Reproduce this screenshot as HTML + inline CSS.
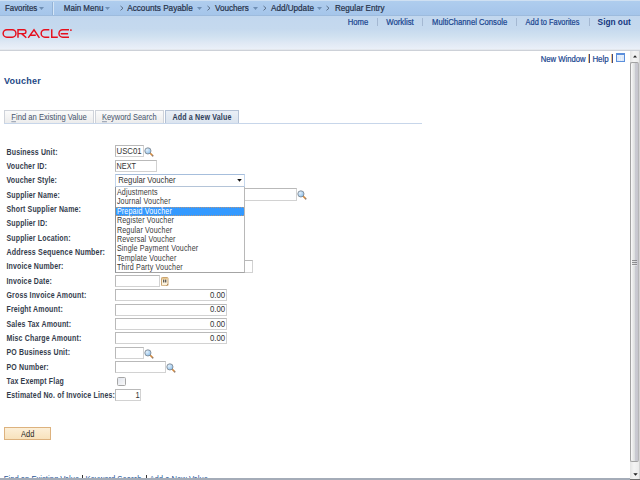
<!DOCTYPE html>
<html><head><meta charset="utf-8"><style>
html,body{margin:0;padding:0;width:640px;height:480px;overflow:hidden;background:#fff}
body{position:relative;font-family:"Liberation Sans",sans-serif}
.t{position:absolute;white-space:pre;line-height:1}
.s{-webkit-text-stroke:0.2px currentColor}
.b{position:absolute;display:block}
.tab{border:1px solid #cfd3da;border-bottom:none;background:linear-gradient(#fbfbfb,#ececec)}
.tabA{border:1px solid #b4c2d6;border-bottom:none;background:linear-gradient(#e9eff6,#dbe4ef)}
</style></head><body>
<div class="b" style="left:0px;top:0px;width:640px;height:1px;background:#cfe0f2"></div>
<div class="b" style="left:0px;top:1px;width:640px;height:14px;background:linear-gradient(#afcdee,#a5c5ea)"></div>
<div class="b" style="left:0px;top:15px;width:640px;height:1px;background:#9dbbdd"></div>
<div class="t" style="left:5px;top:5px;font-size:7.85px;font-weight:normal;color:#26324a;transform:scaleY(1.12);transform-origin:0 6px;-webkit-text-stroke:0.2px #26324a">Favorites</div>
<div class="b" style="left:52px;top:2px;width:1px;height:13px;background:#94b3d6"></div>
<div class="b" style="left:53px;top:2px;width:1px;height:13px;background:#d6e6f6"></div>
<div class="t" style="left:63.8px;top:5px;font-size:8.0px;font-weight:normal;color:#26324a;transform:scaleY(1.12);transform-origin:0 6px;-webkit-text-stroke:0.2px #26324a">Main Menu</div>
<div class="t" style="left:127.2px;top:5px;font-size:8.2px;font-weight:normal;color:#26324a;transform:scaleY(1.12);transform-origin:0 6px;-webkit-text-stroke:0.2px #26324a">Accounts Payable</div>
<div class="t" style="left:215px;top:5px;font-size:8.15px;font-weight:normal;color:#26324a;transform:scaleY(1.12);transform-origin:0 6px;-webkit-text-stroke:0.2px #26324a">Vouchers</div>
<div class="t" style="left:271px;top:5px;font-size:8.15px;font-weight:normal;color:#26324a;transform:scaleY(1.12);transform-origin:0 6px;-webkit-text-stroke:0.2px #26324a">Add/Update</div>
<div class="t" style="left:335px;top:5px;font-size:8.1px;font-weight:normal;color:#26324a;transform:scaleY(1.12);transform-origin:0 6px;-webkit-text-stroke:0.2px #26324a">Regular Entry</div>
<svg class="b" style="left:39.2px;top:7px" width="5" height="3"><path d="M0 0H5L2.5 3Z" fill="#6f8fb4"/></svg>
<svg class="b" style="left:105.2px;top:7px" width="5" height="3"><path d="M0 0H5L2.5 3Z" fill="#6f8fb4"/></svg>
<svg class="b" style="left:196.8px;top:7px" width="5" height="3"><path d="M0 0H5L2.5 3Z" fill="#6f8fb4"/></svg>
<svg class="b" style="left:252.8px;top:7px" width="5" height="3"><path d="M0 0H5L2.5 3Z" fill="#6f8fb4"/></svg>
<svg class="b" style="left:316.5px;top:7px" width="5" height="3"><path d="M0 0H5L2.5 3Z" fill="#6f8fb4"/></svg>
<svg class="b" style="left:119.5px;top:5px" width="4" height="7"><path d="M0.5 1L3 3.2L0.5 5.4" stroke="#4e5e74" stroke-width="0.85" fill="none"/></svg>
<svg class="b" style="left:206.8px;top:5px" width="4" height="7"><path d="M0.5 1L3 3.2L0.5 5.4" stroke="#4e5e74" stroke-width="0.85" fill="none"/></svg>
<svg class="b" style="left:262.6px;top:5px" width="4" height="7"><path d="M0.5 1L3 3.2L0.5 5.4" stroke="#4e5e74" stroke-width="0.85" fill="none"/></svg>
<svg class="b" style="left:326.2px;top:5px" width="4" height="7"><path d="M0.5 1L3 3.2L0.5 5.4" stroke="#4e5e74" stroke-width="0.85" fill="none"/></svg>
<div class="b" style="left:0px;top:16px;width:640px;height:34px;background:linear-gradient(#c2d7ee,#c5d9ee 38%,#d0e1f0 60%,#e0e9f5 80%,#ecf1f9)"></div>
<div class="b" style="left:0px;top:49px;width:640px;height:1px;background:#e4e8ee"></div>
<div class="b" style="left:0px;top:50px;width:640px;height:1px;background:#cdd1d8"></div>
<div class="t" style="left:347.7px;top:19px;font-size:7.7px;font-weight:normal;color:#1a4690;transform:scaleY(1.12);transform-origin:0 6px;-webkit-text-stroke:0.2px #1a4690">Home</div>
<div class="b" style="left:377px;top:18px;width:1px;height:8px;background:#a4b8d2"></div>
<div class="t" style="left:386.2px;top:19px;font-size:7.8px;font-weight:normal;color:#1a4690;transform:scaleY(1.12);transform-origin:0 6px;-webkit-text-stroke:0.2px #1a4690">Worklist</div>
<div class="b" style="left:422px;top:18px;width:1px;height:8px;background:#a4b8d2"></div>
<div class="t" style="left:432px;top:19px;font-size:7.7px;font-weight:normal;color:#1a4690;transform:scaleY(1.12);transform-origin:0 6px;-webkit-text-stroke:0.2px #1a4690">MultiChannel Console</div>
<div class="b" style="left:516px;top:18px;width:1px;height:8px;background:#a4b8d2"></div>
<div class="t" style="left:525.6px;top:19px;font-size:7.4px;font-weight:normal;color:#1a4690;transform:scaleY(1.12);transform-origin:0 6px;-webkit-text-stroke:0.2px #1a4690">Add to Favorites</div>
<div class="b" style="left:589px;top:18px;width:1px;height:8px;background:#a4b8d2"></div>
<div class="t" style="left:597.6px;top:18px;font-size:8.3px;font-weight:bold;color:#143780;transform:scaleY(1.12);transform-origin:0 6px;">Sign out</div>
<svg class="b" style="left:0px;top:26px" width="76" height="15" viewBox="0 0 76 15">
<g fill="none" stroke="#e60f1c" stroke-width="1.45">
<path d="M6.85 3.75H12.25A3.7 3.7 0 0 1 12.25 11.15H6.85A3.7 3.7 0 0 1 6.85 3.75Z"/>
<path d="M18 11.8V3.75H24.2A1.93 1.93 0 0 1 24.2 7.6H18M21.6 7.6L26.3 11.8"/>
<path d="M28.2 11.8L34 3.75L39.4 11.8M30.4 9.2H35.8"/>
<path d="M49.3 3.75H44.85A3.7 3.7 0 0 0 44.85 11.15H49.3"/>
<path d="M51.75 3.2V11.15H57.8"/>
<path d="M69 3.75H62.65A3.7 3.7 0 0 0 62.65 11.15H69M60.7 7.65H68.1"/>
</g>
<circle cx="70.9" cy="4.1" r="0.95" fill="#e4121c"/>
</svg>
<div class="b" style="left:0px;top:51px;width:630px;height:429px;background:#fff"></div>
<div class="t" style="left:540.8px;top:56px;font-size:7.7px;font-weight:normal;color:#1a4690;transform:scaleY(1.12);transform-origin:0 6px;-webkit-text-stroke:0.2px #1a4690">New Window</div>
<div class="b" style="left:588px;top:54px;width:1px;height:9px;background:#f0c080"></div>
<div class="b" style="left:589px;top:54px;width:1px;height:9px;background:#3c4c88"></div>
<div class="t" style="left:592.4px;top:56px;font-size:7.9px;font-weight:normal;color:#1a4690;transform:scaleY(1.12);transform-origin:0 6px;-webkit-text-stroke:0.2px #1a4690">Help</div>
<div class="b" style="left:611px;top:54px;width:1px;height:9px;background:#f0c080"></div>
<div class="b" style="left:612px;top:54px;width:1px;height:9px;background:#3c4c88"></div>
<svg class="b" style="left:616px;top:53px" width="9" height="9">
<rect x="0.5" y="0.5" width="8" height="8" fill="#d2e2f7" stroke="#5b8fdc"/>
<rect x="1" y="1" width="7" height="1.3" fill="#5b8fdc"/>
<rect x="1" y="2.3" width="7" height="1" fill="#ffffff"/>
<path d="M1 5H8M1 6.8H8M3.5 3.3V8M5.5 3.3V8" stroke="#f2f7fd" stroke-width="0.6"/>
</svg>
<div class="t" style="left:3.9px;top:77px;font-size:9.0px;font-weight:bold;color:#234886;letter-spacing:0.25px">Voucher</div>
<div class="b" style="left:4px;top:123px;width:418px;height:1px;background:#c7d6ea"></div>
<div class="b tab" style="left:4px;top:110px;width:88px;height:12px"></div>
<div class="t" style="left:11.3px;top:114px;font-size:7.65px;font-weight:normal;color:#46546c;transform:scaleY(1.12);transform-origin:0 6px;"><u style="text-decoration-thickness:0.5px;text-underline-offset:1px;text-decoration-color:#9aa4b4">F</u>ind an Existing Value</div>
<div class="b tab" style="left:95px;top:110px;width:67px;height:12px"></div>
<div class="t" style="left:102px;top:114px;font-size:7.45px;font-weight:normal;color:#46546c;transform:scaleY(1.12);transform-origin:0 6px;"><u style="text-decoration-thickness:0.5px;text-underline-offset:1px;text-decoration-color:#9aa4b4">K</u>eyword Search</div>
<div class="b tabA" style="left:165px;top:110px;width:72px;height:12px"></div>
<div class="t" style="left:172.5px;top:115px;font-size:7.1px;font-weight:bold;color:#2e3d58;transform:scaleY(1.16);transform-origin:0 6px;letter-spacing:0.15px">Add a New Value</div>
<div class="t" style="left:6.5px;top:149px;font-size:7.0px;font-weight:bold;color:#343c4c;transform:scaleY(1.18);transform-origin:0 6px;letter-spacing:0.15px">Business Unit:</div>
<div class="t" style="left:6.5px;top:163px;font-size:7.0px;font-weight:bold;color:#343c4c;transform:scaleY(1.18);transform-origin:0 6px;letter-spacing:0.15px">Voucher ID:</div>
<div class="t" style="left:6.5px;top:177px;font-size:7.0px;font-weight:bold;color:#343c4c;transform:scaleY(1.18);transform-origin:0 6px;letter-spacing:0.15px">Voucher Style:</div>
<div class="t" style="left:6.5px;top:192px;font-size:7.0px;font-weight:bold;color:#343c4c;transform:scaleY(1.18);transform-origin:0 6px;letter-spacing:0.15px">Supplier Name:</div>
<div class="t" style="left:6.5px;top:206px;font-size:7.0px;font-weight:bold;color:#343c4c;transform:scaleY(1.18);transform-origin:0 6px;letter-spacing:0.15px">Short Supplier Name:</div>
<div class="t" style="left:6.5px;top:220px;font-size:7.0px;font-weight:bold;color:#343c4c;transform:scaleY(1.18);transform-origin:0 6px;letter-spacing:0.15px">Supplier ID:</div>
<div class="t" style="left:6.5px;top:235px;font-size:7.0px;font-weight:bold;color:#343c4c;transform:scaleY(1.18);transform-origin:0 6px;letter-spacing:0.15px">Supplier Location:</div>
<div class="t" style="left:6.5px;top:250px;font-size:7.1px;font-weight:bold;color:#343c4c;transform:scaleY(1.18);transform-origin:0 6px;letter-spacing:0.15px">Address Sequence Number:</div>
<div class="t" style="left:6.5px;top:263px;font-size:7.0px;font-weight:bold;color:#343c4c;transform:scaleY(1.18);transform-origin:0 6px;letter-spacing:0.15px">Invoice Number:</div>
<div class="t" style="left:6.5px;top:278px;font-size:7.0px;font-weight:bold;color:#343c4c;transform:scaleY(1.18);transform-origin:0 6px;letter-spacing:0.15px">Invoice Date:</div>
<div class="t" style="left:6.5px;top:292px;font-size:7.0px;font-weight:bold;color:#343c4c;transform:scaleY(1.18);transform-origin:0 6px;letter-spacing:0.15px">Gross Invoice Amount:</div>
<div class="t" style="left:6.5px;top:306px;font-size:7.0px;font-weight:bold;color:#343c4c;transform:scaleY(1.18);transform-origin:0 6px;letter-spacing:0.15px">Freight Amount:</div>
<div class="t" style="left:6.5px;top:321px;font-size:7.0px;font-weight:bold;color:#343c4c;transform:scaleY(1.18);transform-origin:0 6px;letter-spacing:0.15px">Sales Tax Amount:</div>
<div class="t" style="left:6.5px;top:335px;font-size:7.0px;font-weight:bold;color:#343c4c;transform:scaleY(1.18);transform-origin:0 6px;letter-spacing:0.15px">Misc Charge Amount:</div>
<div class="t" style="left:6.5px;top:349px;font-size:7.0px;font-weight:bold;color:#343c4c;transform:scaleY(1.18);transform-origin:0 6px;letter-spacing:0.15px">PO Business Unit:</div>
<div class="t" style="left:6.5px;top:364px;font-size:7.0px;font-weight:bold;color:#343c4c;transform:scaleY(1.18);transform-origin:0 6px;letter-spacing:0.15px">PO Number:</div>
<div class="t" style="left:6.5px;top:378px;font-size:7.0px;font-weight:bold;color:#343c4c;transform:scaleY(1.18);transform-origin:0 6px;letter-spacing:0.15px">Tax Exempt Flag</div>
<div class="t" style="left:6.5px;top:392px;font-size:7.0px;font-weight:bold;color:#343c4c;transform:scaleY(1.18);transform-origin:0 6px;letter-spacing:0.15px">Estimated No. of Invoice Lines:</div>
<div class="b" style="left:115px;top:145px;width:29px;height:12px;border:1px solid #b9b9b9;border-right-color:#d2d2d2;border-bottom-color:#d2d2d2;background:#fff;box-sizing:border-box"></div>
<div class="t" style="left:116.5px;top:148px;font-size:7.8px;font-weight:normal;color:#333;transform:scaleY(1.12);transform-origin:0 6px;">USC01</div>
<svg class="b" style="left:144px;top:147px" width="10" height="10">
<defs><radialGradient id="lg" cx="0.35" cy="0.35" r="0.7"><stop offset="0" stop-color="#e4f1fc"/><stop offset="1" stop-color="#8dbfea"/></radialGradient></defs>
<path d="M6 6L8.6 8.6" stroke="#d28a40" stroke-width="1.7" stroke-linecap="round"/>
<circle cx="8.8" cy="8.8" r="0.6" fill="#4a78b8"/>
<circle cx="3.9" cy="3.9" r="3.1" fill="url(#lg)" stroke="#7a8088" stroke-width="0.8"/>
</svg>
<div class="b" style="left:115px;top:160px;width:42px;height:12px;border:1px solid #b9b9b9;border-right-color:#d2d2d2;border-bottom-color:#d2d2d2;background:#fff;box-sizing:border-box"></div>
<div class="t" style="left:116.5px;top:163px;font-size:7.3px;font-weight:normal;color:#333;transform:scaleY(1.12);transform-origin:0 6px;">NEXT</div>
<div class="b" style="left:115px;top:188px;width:182px;height:13px;border:1px solid #b9b9b9;border-right-color:#d2d2d2;border-bottom-color:#d2d2d2;background:#fff;box-sizing:border-box"></div>
<svg class="b" style="left:297px;top:189.5px" width="10" height="10">
<defs><radialGradient id="lg" cx="0.35" cy="0.35" r="0.7"><stop offset="0" stop-color="#e4f1fc"/><stop offset="1" stop-color="#8dbfea"/></radialGradient></defs>
<path d="M6 6L8.6 8.6" stroke="#d28a40" stroke-width="1.7" stroke-linecap="round"/>
<circle cx="8.8" cy="8.8" r="0.6" fill="#4a78b8"/>
<circle cx="3.9" cy="3.9" r="3.1" fill="url(#lg)" stroke="#7a8088" stroke-width="0.8"/>
</svg>
<div class="b" style="left:115px;top:260px;width:138px;height:13px;border:1px solid #b9b9b9;border-right-color:#d2d2d2;border-bottom-color:#d2d2d2;background:#fff;box-sizing:border-box"></div>
<div class="b" style="left:115px;top:275px;width:45px;height:12px;border:1px solid #b9b9b9;border-right-color:#d2d2d2;border-bottom-color:#d2d2d2;background:#fff;box-sizing:border-box"></div>
<svg class="b" style="left:160.5px;top:276.8px" width="8" height="9.5">
<rect x="0.5" y="0.5" width="6.5" height="8.3" rx="0.8" fill="#fbf1dc" stroke="#c49a62" stroke-width="0.9"/>
<rect x="1" y="1" width="5.5" height="1.5" fill="#e8c890"/>
<rect x="2.2" y="2.6" width="1.1" height="2.8" rx="0.5" fill="#3a3a3a"/><rect x="4.2" y="2.6" width="1.1" height="2.8" rx="0.5" fill="#3a3a3a"/>
<path d="M5.5 8.5L7 7" stroke="#a07a48" stroke-width="0.8"/>
</svg>
<div class="b" style="left:115px;top:289.0px;width:112px;height:12px;border:1px solid #b9b9b9;border-right-color:#d2d2d2;border-bottom-color:#d2d2d2;background:#fff;box-sizing:border-box"></div>
<div class="t" style="left:209.9px;top:292px;font-size:7.8px;font-weight:normal;color:#333;transform:scaleY(1.12);transform-origin:0 6px;">0.00</div>
<div class="b" style="left:115px;top:303.5px;width:112px;height:12px;border:1px solid #b9b9b9;border-right-color:#d2d2d2;border-bottom-color:#d2d2d2;background:#fff;box-sizing:border-box"></div>
<div class="t" style="left:209.9px;top:306px;font-size:7.8px;font-weight:normal;color:#333;transform:scaleY(1.12);transform-origin:0 6px;">0.00</div>
<div class="b" style="left:115px;top:318.0px;width:112px;height:12px;border:1px solid #b9b9b9;border-right-color:#d2d2d2;border-bottom-color:#d2d2d2;background:#fff;box-sizing:border-box"></div>
<div class="t" style="left:209.9px;top:321px;font-size:7.8px;font-weight:normal;color:#333;transform:scaleY(1.12);transform-origin:0 6px;">0.00</div>
<div class="b" style="left:115px;top:332.0px;width:112px;height:12px;border:1px solid #b9b9b9;border-right-color:#d2d2d2;border-bottom-color:#d2d2d2;background:#fff;box-sizing:border-box"></div>
<div class="t" style="left:209.9px;top:335px;font-size:7.8px;font-weight:normal;color:#333;transform:scaleY(1.12);transform-origin:0 6px;">0.00</div>
<div class="b" style="left:115px;top:347px;width:29px;height:12px;border:1px solid #b9b9b9;border-right-color:#d2d2d2;border-bottom-color:#d2d2d2;background:#fff;box-sizing:border-box"></div>
<svg class="b" style="left:144.2px;top:349px" width="10" height="10">
<defs><radialGradient id="lg" cx="0.35" cy="0.35" r="0.7"><stop offset="0" stop-color="#e4f1fc"/><stop offset="1" stop-color="#8dbfea"/></radialGradient></defs>
<path d="M6 6L8.6 8.6" stroke="#d28a40" stroke-width="1.7" stroke-linecap="round"/>
<circle cx="8.8" cy="8.8" r="0.6" fill="#4a78b8"/>
<circle cx="3.9" cy="3.9" r="3.1" fill="url(#lg)" stroke="#7a8088" stroke-width="0.8"/>
</svg>
<div class="b" style="left:115px;top:361px;width:51px;height:12px;border:1px solid #b9b9b9;border-right-color:#d2d2d2;border-bottom-color:#d2d2d2;background:#fff;box-sizing:border-box"></div>
<svg class="b" style="left:166.2px;top:363px" width="10" height="10">
<defs><radialGradient id="lg" cx="0.35" cy="0.35" r="0.7"><stop offset="0" stop-color="#e4f1fc"/><stop offset="1" stop-color="#8dbfea"/></radialGradient></defs>
<path d="M6 6L8.6 8.6" stroke="#d28a40" stroke-width="1.7" stroke-linecap="round"/>
<circle cx="8.8" cy="8.8" r="0.6" fill="#4a78b8"/>
<circle cx="3.9" cy="3.9" r="3.1" fill="url(#lg)" stroke="#7a8088" stroke-width="0.8"/>
</svg>
<div class="b" style="left:117px;top:377px;width:9px;height:9px;border:1px solid #a6a6a6;border-radius:1.5px;background:linear-gradient(135deg,#e2e6ee,#f8f8f8);box-sizing:border-box"></div>
<div class="b" style="left:115px;top:389px;width:26px;height:12px;border:1px solid #b9b9b9;border-right-color:#d2d2d2;border-bottom-color:#d2d2d2;background:#fff;box-sizing:border-box"></div>
<div class="t" style="left:135.4px;top:392px;font-size:7.6px;font-weight:normal;color:#333;transform:scaleY(1.12);transform-origin:0 6px;">1</div>
<div class="b" style="left:4px;top:427px;width:47px;height:13px;border:1px solid #ddb27e;background:linear-gradient(#fcefd8,#f8e2bc);box-sizing:border-box"></div>
<div class="t" style="left:21.1px;top:431px;font-size:7.45px;font-weight:normal;color:#1e1e1e;transform:scaleY(1.12);transform-origin:0 6px;">Add</div>
<div class="b" style="left:115px;top:173.5px;width:130px;height:13.5px;border:1px solid #c4d6ec;border-top-color:#a6bedc;border-bottom-color:#b4c4d8;background:#fff;box-sizing:border-box"></div>
<div class="t" style="left:118.3px;top:177px;font-size:7.7px;font-weight:normal;color:#333;transform:scaleY(1.12);transform-origin:0 6px;">Regular Voucher</div>
<svg class="b" style="left:236.6px;top:179px" width="5" height="3"><path d="M0.2 0.1H4.8L2.5 2.7Z" fill="#111"/></svg>
<div class="b" style="left:115px;top:187px;width:130px;height:85.5px;border:1px solid #8e9298;border-top:none;border-right-color:#b8b8b8;border-bottom-color:#a4a4a4;background:#fff;box-sizing:border-box"></div>
<div class="t" style="left:116.9px;top:190px;font-size:7.15px;font-weight:normal;color:#3a3a3a;transform:scaleY(1.16);transform-origin:0 6px;letter-spacing:0.15px">Adjustments</div>
<div class="t" style="left:116.9px;top:199px;font-size:7.15px;font-weight:normal;color:#3a3a3a;transform:scaleY(1.16);transform-origin:0 6px;letter-spacing:0.15px">Journal Voucher</div>
<div class="b" style="left:116px;top:207px;width:127.8px;height:8.5px;background:#3399ff;border-top:1px dotted rgba(230,150,80,0.7);border-bottom:1px dotted rgba(230,150,80,0.7);box-sizing:border-box"></div>
<div class="t" style="left:116.9px;top:209px;font-size:7.15px;font-weight:normal;color:#fff;transform:scaleY(1.16);transform-origin:0 6px;letter-spacing:0.15px">Prepaid Voucher</div>
<div class="t" style="left:116.9px;top:218px;font-size:7.15px;font-weight:normal;color:#3a3a3a;transform:scaleY(1.16);transform-origin:0 6px;letter-spacing:0.15px">Register Voucher</div>
<div class="t" style="left:116.9px;top:228px;font-size:7.15px;font-weight:normal;color:#3a3a3a;transform:scaleY(1.16);transform-origin:0 6px;letter-spacing:0.15px">Regular Voucher</div>
<div class="t" style="left:116.9px;top:237px;font-size:7.15px;font-weight:normal;color:#3a3a3a;transform:scaleY(1.16);transform-origin:0 6px;letter-spacing:0.15px">Reversal Voucher</div>
<div class="t" style="left:116.9px;top:246px;font-size:7.15px;font-weight:normal;color:#3a3a3a;transform:scaleY(1.16);transform-origin:0 6px;letter-spacing:0.15px">Single Payment Voucher</div>
<div class="t" style="left:116.9px;top:256px;font-size:7.15px;font-weight:normal;color:#3a3a3a;transform:scaleY(1.16);transform-origin:0 6px;letter-spacing:0.15px">Template Voucher</div>
<div class="t" style="left:116.9px;top:265px;font-size:7.15px;font-weight:normal;color:#3a3a3a;transform:scaleY(1.16);transform-origin:0 6px;letter-spacing:0.15px">Third Party Voucher</div>
<div class="t" style="left:3.8px;top:476px;font-size:7.65px;font-weight:normal;color:#2d5a9a;transform:scaleY(1.12);transform-origin:0 6px;">Find an Existing Value</div>
<div class="b" style="left:82px;top:475px;width:1px;height:4px;background:#333"></div>
<div class="t" style="left:85.5px;top:476px;font-size:7.65px;font-weight:normal;color:#2d5a9a;transform:scaleY(1.12);transform-origin:0 6px;">Keyword Search</div>
<div class="b" style="left:146px;top:475px;width:1px;height:4px;background:#333"></div>
<div class="t" style="left:149.5px;top:476px;font-size:7.65px;font-weight:normal;color:#2d5a9a;transform:scaleY(1.12);transform-origin:0 6px;">Add a New Value</div>
<div class="b" style="left:0px;top:478.3px;width:630px;height:1.7px;background:#a4acb8"></div>
<div class="b" style="left:630px;top:51px;width:10px;height:429px;background:linear-gradient(90deg,#e4e4e4,#f4f4f4 40%,#ececec 85%,#c8c8c8)"></div>
<svg class="b" style="left:632.8px;top:55px" width="4" height="3"><path d="M0 2.6H4L2 0.2Z" fill="#222"/></svg>
<div class="b" style="left:630px;top:62.2px;width:9.3px;height:400.3px;border:1px solid #a2a2a2;border-right-color:#b6b6b8;border-radius:2px;background:linear-gradient(90deg,#fbfbfb,#e8e8e8 30%,#dde0e0 50%,#cacad2 62%,#c6c6ce 100%);box-sizing:border-box"></div>
<svg class="b" style="left:632px;top:260px" width="5" height="6"><path d="M0 1.1H5M0 3.1H5M0 5.1H5" stroke="#fafafa" stroke-width="0.8"/><path d="M0 0.4H5M0 2.4H5M0 4.4H5" stroke="#6a6a6e" stroke-width="0.8"/></svg>
<svg class="b" style="left:633px;top:473px" width="5" height="3"><path d="M0.3 0.2H4.7L2.5 2.8Z" fill="#222"/></svg>
<div class="b" style="left:630px;top:478.5px;width:10px;height:1.5px;background:#6c6c6c"></div>
</body></html>
